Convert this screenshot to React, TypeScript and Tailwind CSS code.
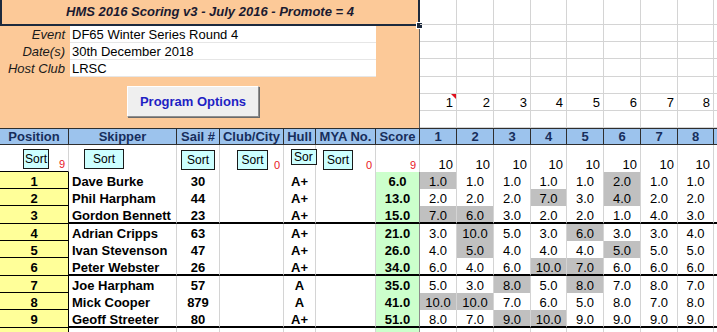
import React from 'react';

type Row = {
  pos: number;
  name: string;
  sail: string;
  hull: string;
  score: string;
  r: string[];
  g: number[];
};

const rows: Row[] = [
  { pos: 1, name: 'Dave Burke', sail: '30', hull: 'A+', score: '6.0', r: ['1.0', '1.0', '1.0', '1.0', '1.0', '2.0', '1.0', '1.0'], g: [0, 5] },
  { pos: 2, name: 'Phil Harpham', sail: '44', hull: 'A+', score: '13.0', r: ['2.0', '2.0', '2.0', '7.0', '3.0', '4.0', '2.0', '2.0'], g: [3, 5] },
  { pos: 3, name: 'Gordon Bennett', sail: '23', hull: 'A+', score: '15.0', r: ['7.0', '6.0', '3.0', '2.0', '2.0', '1.0', '4.0', '3.0'], g: [0, 1] },
  { pos: 4, name: 'Adrian Cripps', sail: '63', hull: 'A+', score: '21.0', r: ['3.0', '10.0', '5.0', '3.0', '6.0', '3.0', '3.0', '4.0'], g: [1, 4] },
  { pos: 5, name: 'Ivan Stevenson', sail: '47', hull: 'A+', score: '26.0', r: ['4.0', '5.0', '4.0', '4.0', '4.0', '5.0', '5.0', '5.0'], g: [1, 5] },
  { pos: 6, name: 'Peter Webster', sail: '26', hull: 'A+', score: '34.0', r: ['6.0', '4.0', '6.0', '10.0', '7.0', '6.0', '6.0', '6.0'], g: [3, 4] },
  { pos: 7, name: 'Joe Harpham', sail: '57', hull: 'A', score: '35.0', r: ['5.0', '3.0', '8.0', '5.0', '8.0', '7.0', '8.0', '7.0'], g: [2, 4] },
  { pos: 8, name: 'Mick Cooper', sail: '879', hull: 'A', score: '41.0', r: ['10.0', '10.0', '7.0', '6.0', '5.0', '8.0', '7.0', '8.0'], g: [0, 1] },
  { pos: 9, name: 'Geoff Streeter', sail: '80', hull: 'A+', score: '51.0', r: ['8.0', '7.0', '9.0', '10.0', '9.0', '9.0', '9.0', '9.0'], g: [2, 3] },
];

const raceW = ['w-[37px]', 'w-[37px]', 'w-[37px]', 'w-[36px]', 'w-[37px]', 'w-[37px]', 'w-[37px]', 'w-[36px]'];
const topRowH = ['h-[25px]', 'h-[17px]', 'h-[17px]', 'h-[18px]', 'h-[17px]', 'h-[17px]', 'h-[17px]'];

const TopSection: React.FC = () => (
  <div className="flex h-[128px]">
    {/* Orange event panel */}
    <div className="relative flex w-[420px] shrink-0 flex-col border-r border-[#5c5c5c] bg-[#fcc998]">
      <div className="-mr-px flex h-[26px] items-center justify-center border-b-2 border-l-2 border-r-2 border-[#1c2a3e] font-bold italic text-[#1a1a30]">
        HMS 2016 Scoring v3 - July 2016 - Promote = 4
      </div>
      <span className="absolute left-[416px] top-[22px] h-[7px] w-[7px] border border-white bg-[#1c2a3e]" />
      {[
        ['Event', 'DF65 Winter Series Round 4'],
        ['Date(s)', '30th December 2018'],
        ['Host Club', 'LRSC'],
      ].map(([label, value]) => (
        <div key={label} className="flex h-[17px] leading-[17px]">
          <div className="w-[70px] pr-[5px] text-right italic text-[#1a1a1a]">{label}</div>
          <div className="w-[306px] border-b border-[#e6e6e6] bg-white pl-[2px]">{value}</div>
        </div>
      ))}
      <button className="ml-[127px] mt-[9px] h-[31px] w-[132px] border border-b-[#8f8f8f] border-l-white border-r-[#8f8f8f] border-t-white bg-[#efefef] text-[13px] font-bold text-[#1f1fc4] shadow-[1px_1px_0_#6a6a6a]">
        Program Options
      </button>
    </div>

    {/* Empty sheet grid */}
    <div className="flex flex-1 flex-col">
      {topRowH.map((h, i) => (
        <div key={i} className={`flex ${h}`}>
          {raceW.map((w, j) => (
            <div
              key={j}
              className={`relative flex ${w} items-end justify-end border-b border-r border-[#d4d4d4] pr-[3px] leading-[15px]`}
            >
              {i === 5 ? j + 1 : null}
              {i === 5 && j === 0 ? (
                <span className="absolute right-0 top-0 h-0 w-0 border-l-[5px] border-t-[5px] border-l-transparent border-t-[#e0101e]" />
              ) : null}
            </div>
          ))}
          <div className="flex-1 border-b border-[#d4d4d4]" />
        </div>
      ))}
    </div>
  </div>
);

const headCell = 'flex items-center justify-center border-r border-[#2e2e2e]';

const HeaderRow: React.FC = () => (
  <div className="flex h-[17px] border-b border-t border-[#2e2e2e] bg-[#9cc3ed] font-bold leading-[15px] text-[#172e5c]">
    <div className={`${headCell} w-[69px]`}>Position</div>
    <div className={`${headCell} w-[108px]`}>Skipper</div>
    <div className={`${headCell} w-[43px]`}>Sail #</div>
    <div className={`${headCell} w-[64px]`}>Club/City</div>
    <div className={`${headCell} w-[32px]`}>Hull</div>
    <div className={`${headCell} w-[60px]`}>MYA No.</div>
    <div className={`${headCell} w-[44px]`}>Score</div>
    {raceW.map((w, j) => (
      <div key={j} className={`${headCell} ${w}`}>
        {j + 1}
      </div>
    ))}
    <div className="flex-1" />
  </div>
);

const SortButton: React.FC<{ className: string; label?: string }> = ({ className, label = 'Sort' }) => (
  <div
    className={`absolute flex items-center justify-center overflow-hidden whitespace-nowrap border border-[#1a1a1a] bg-[#ccffff] text-[12px] leading-none text-black ${className}`}
  >
    {label}
  </div>
);

const sortCell = 'relative flex items-end justify-end border-r border-[#d4d4d4] pr-[3px]';
const redNum = 'text-[11px] leading-[13px] text-[#e8141e]';

const SortRow: React.FC = () => (
  <div className="flex h-[27px]">
    <div className={`${sortCell} w-[69px] border-b border-b-black`}>
      <SortButton className="left-[23px] top-[4px] h-[20px] w-[26px]" />
      <span className={redNum}>9</span>
    </div>
    <div className={`${sortCell} w-[108px]`}>
      <SortButton className="left-[15px] top-[4px] h-[20px] w-[40px]" />
    </div>
    <div className={`${sortCell} w-[43px]`}>
      <SortButton className="left-[4px] top-[5px] h-[20px] w-[34px]" />
    </div>
    <div className={`${sortCell} w-[64px]`}>
      <SortButton className="left-[17px] top-[5px] h-[20px] w-[31px]" />
      <span className={redNum}>0</span>
    </div>
    <div className={`${sortCell} w-[32px]`}>
      <SortButton className="left-[7px] top-[4px] h-[16px] w-[26px] justify-start pl-[2px]" label="Sor" />
    </div>
    <div className={`${sortCell} w-[60px]`}>
      <SortButton className="left-[7px] top-[5px] h-[20px] w-[30px]" />
      <span className={redNum}>0</span>
    </div>
    <div className={`${sortCell} w-[44px]`}>
      <span className={redNum}>9</span>
    </div>
    {raceW.map((w, j) => (
      <div key={j} className={`${sortCell} ${w} leading-[14px]`}>
        10
      </div>
    ))}
    <div className="flex-1" />
  </div>
);

const DataRow: React.FC<{ row?: Row; thick?: boolean }> = ({ row, thick }) => {
  const h = thick ? 'h-[18px]' : 'h-[17px]';
  const line = thick ? 'border-b-2 border-b-black' : '';
  const cell = `border-r border-[#d4d4d4] pt-[3px] leading-[14px] whitespace-nowrap ${line}`;
  return (
    <div className={`flex ${h}`}>
      <div className="w-[69px] border-b border-r border-black bg-[#ffff99] pt-[3px] text-center font-bold leading-[14px]">
        {row?.pos}
      </div>
      <div className={`${cell} w-[108px] pl-[3px] font-bold`}>{row?.name}</div>
      <div className={`${cell} w-[43px] text-center font-bold`}>{row?.sail}</div>
      <div className={`${cell} w-[64px]`} />
      <div className={`${cell} w-[32px] text-center font-bold`}>{row?.hull}</div>
      <div className={`${cell} w-[60px]`} />
      <div className={`${cell} w-[44px] border-r-[#8c8c8c] bg-[#ccffcc] text-center font-bold`}>{row?.score}</div>
      {raceW.map((w, j) => (
        <div key={j} className={`${cell} ${w} text-center ${row && row.g.includes(j) ? 'bg-[#c0c0c0]' : ''}`}>
          {row?.r[j]}
        </div>
      ))}
      <div className={`flex-1 ${line}`} />
    </div>
  );
};

export default function App() {
  return (
    <div className="h-[332px] w-[717px] overflow-hidden bg-white font-['Liberation_Sans',Arial,sans-serif] text-[13px] text-black">
      <TopSection />
      <HeaderRow />
      <SortRow />
      {rows.map((row, i) => (
        <DataRow key={row.pos} row={row} thick={i % 3 === 2} />
      ))}
      <DataRow />
    </div>
  );
}
